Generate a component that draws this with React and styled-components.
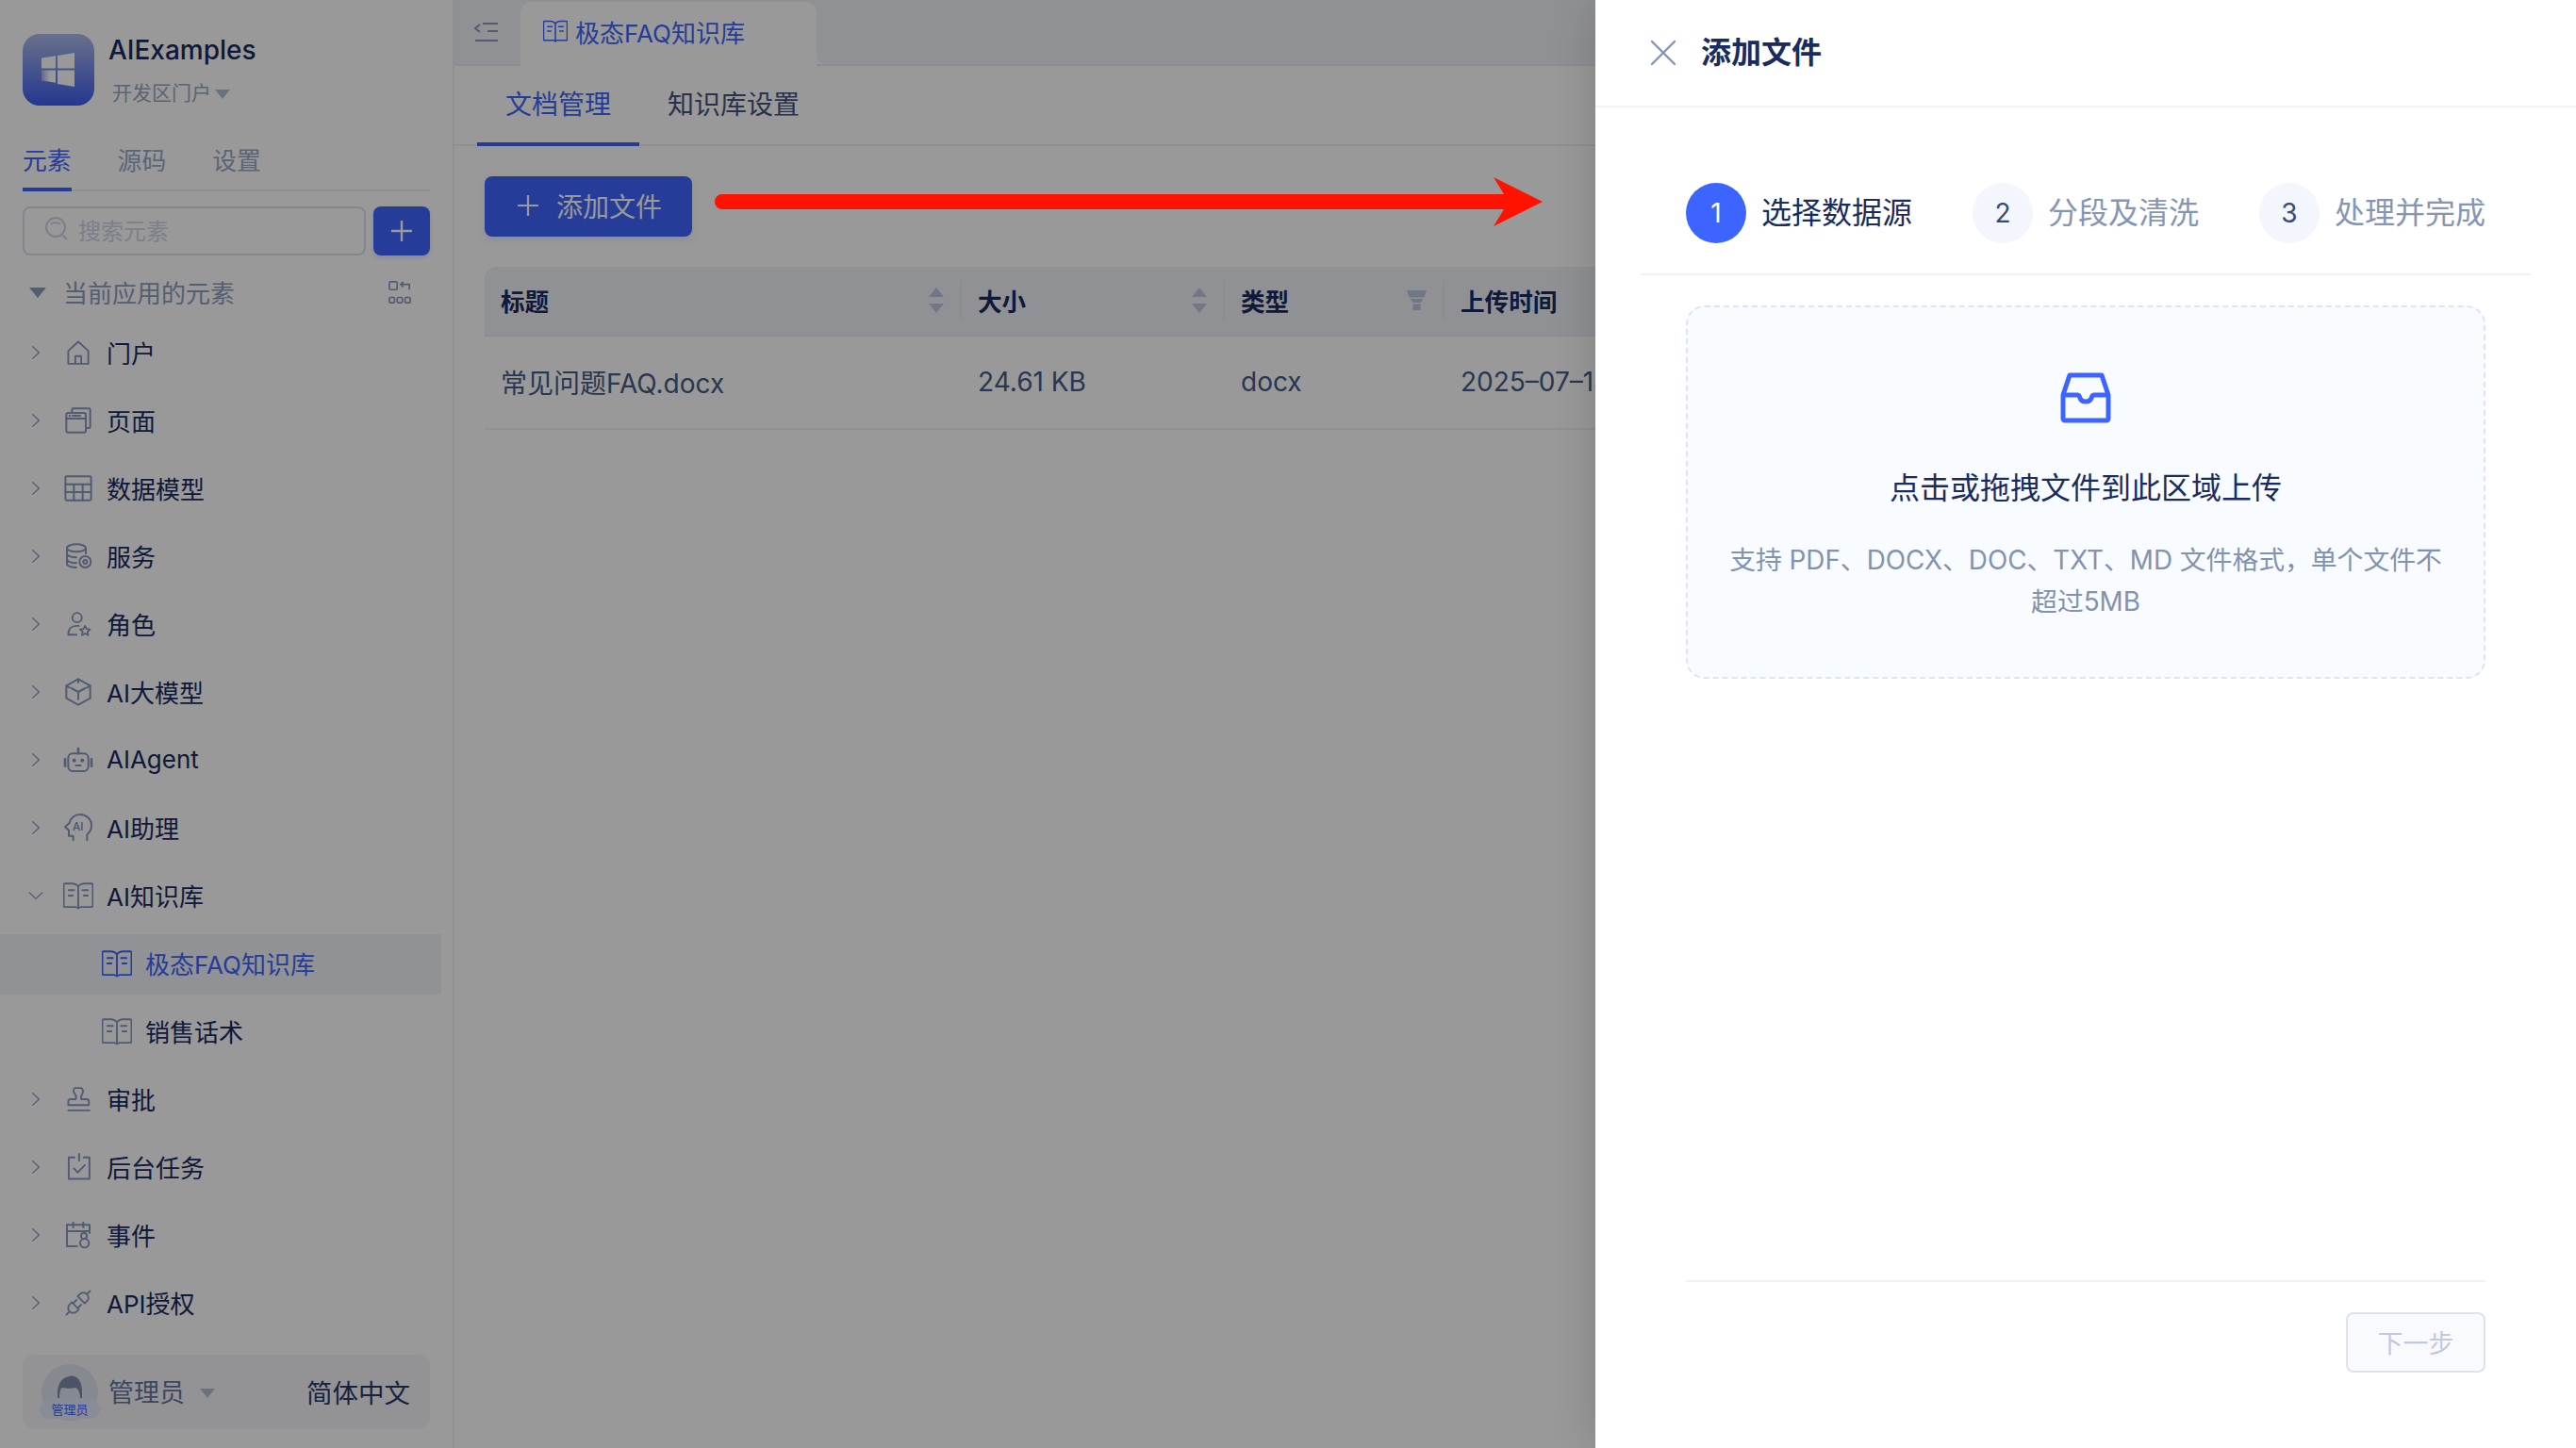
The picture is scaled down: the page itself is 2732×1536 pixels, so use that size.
import React from "react";
import styled, { createGlobalStyle } from "styled-components";

const Global = createGlobalStyle`
  html, body { margin: 0; padding: 0; background: #fff; }
  body { font-family: "Inter", "Noto Sans CJK SC", "Noto Sans", sans-serif; color: #1a2b5f; }
  * { box-sizing: border-box; }
`;

const BLUE = "#3e64ff";
const ICON = "#8798bf";

const Page = styled.div`position: relative; display: flex; width: 2732px; height: 1536px; overflow: hidden; background: #fff;`;
const Sidebar = styled.aside`display: flex; flex-direction: column; flex: 0 0 482px; height: 100%; border-right: 2px solid #eef1f7; background: #fff;`;
const Brand = styled.div`display: flex; gap: 15px; padding: 36px 24px 0; height: 112px;`;
const LogoBox = styled.div`display: flex; align-items: center; justify-content: center; width: 76px; height: 76px; border-radius: 18px; background: linear-gradient(180deg, #aebce8 0%, #3d5cf0 100%);`;
const BrandText = styled.div`display: flex; flex-direction: column;`;
const BrandTitle = styled.div`font-size: 28px; line-height: 34px; color: #1a2b5f; font-weight: 500;`;
const BrandSub = styled.div`display: flex; align-items: center; gap: 4px; margin: 15px 0 0 4px; font-size: 21px; line-height: 28px; color: #9aa6bf;`;
const Caret = styled.span`display: inline-block; width: 0; height: 0; border-left: 8px solid transparent; border-right: 8px solid transparent; border-top: 10px solid #b3bdd4; margin-top: 2px;`;
const SideTabs = styled.div`display: flex; gap: 49px; height: 63px; margin: 28px 24px 0; border-bottom: 2px solid #eef0f5;`;
const SideTab = styled.div`display: flex; align-items: center; height: 63px; padding-bottom: 2px; flex: none; font-size: 25.8px; color: ${p => (p.$active ? BLUE : "#99a8c6")}; border-bottom: 4px solid ${p => (p.$active ? BLUE : "transparent")};`;
const SearchRow = styled.div`display: flex; gap: 8px; padding: 0 24px; margin-top: 16px;`;
const SearchBox = styled.div`display: flex; align-items: center; gap: 11px; flex: 1; height: 52px; padding: 0 0 4px 22px; border: 2px solid #dbe0ea; border-radius: 8px; font-size: 24px; color: #cdd5e6;`;
const AddSquare = styled.div`display: flex; align-items: center; justify-content: center; flex: 0 0 60px; height: 52px; border-radius: 8px; background: ${BLUE}; box-shadow: 0 2px 4px rgba(62,100,255,.2);`;
const SectionHead = styled.div`display: flex; align-items: center; height: 64px; margin-top: 8px; padding: 0 24px 3px 30px; font-size: 26px; color: #8d9dbf;`;
const SectionCaret = styled.span`width: 0; height: 0; border-left: 9px solid transparent; border-right: 9px solid transparent; border-top: 11px solid #8d9dbf; margin: 2px 18px 0 1px;`;
const SectionTools = styled.span`margin-left: auto; margin-right: 20px; display: flex;`;
const Tree = styled.div`display: flex; flex-direction: column; gap: 8px; width: 468px;`;
const TreeRow = styled.div`display: flex; align-items: center; height: 64px; padding: 0 0 3px ${p => (p.$child ? 108 : 29)}px; background: ${p => (p.$selected ? "#f1f4fb" : "transparent")}; color: ${p => (p.$selected ? BLUE : "#1a2b5f")}; font-size: 26px;`;
const ChevronSlot = styled.span`display: flex; align-items: center; justify-content: center; flex: 0 0 18px; width: 18px; margin-right: 20px; color: ${ICON};`;
const IconSlot = styled.span`display: flex; align-items: center; justify-content: center; flex: 0 0 32px; width: 32px; height: 32px; margin-right: 14px; color: ${p => (p.$selected ? BLUE : ICON)};`;
const UserBar = styled.div`display: flex; align-items: center; height: 79px; margin: auto 24px 20px; padding: 0 21px 0 20px; border-radius: 12px; background: #f5f6fa;`;
const Avatar = styled.div`position: relative; flex: 0 0 60px; width: 60px; height: 60px; margin-right: 11px; border-radius: 50%; background: #dfe4ef; display: flex; justify-content: center; align-items: flex-start; padding-top: 12px;`;
const AvatarBadge = styled.span`position: absolute; left: -2px; bottom: 2px; width: 64px; height: 20px; border-radius: 10px; background: #e3e9fb; color: ${BLUE}; font-size: 13px; line-height: 20px; text-align: center;`;
const UserName = styled.span`padding-bottom: 2px; font-size: 27px; color: #66769f; margin-right: 16px;`;
const Lang = styled.span`padding-bottom: 2px; margin-left: auto; font-size: 27.5px; color: #2a3a66;`;

const Main = styled.main`display: flex; flex-direction: column; flex: 1; min-width: 0; background: #fff;`;
const TopBar = styled.div`display: flex; align-items: flex-end; height: 70px; flex: none; padding-left: 21px; background: #f0f2f8; border-bottom: 2px solid #e9ecf3;`;
const Collapse = styled.span`display: flex; align-self: center; width: 26px; margin-right: 23px; color: ${ICON};`;
const DocTab = styled.div`position: relative; display: flex; align-items: center; gap: 8px; width: 314px; height: 68px; margin-bottom: -2px; padding: 0 0 6px 24px; border-radius: 12px 12px 0 0; background: #fff; color: ${BLUE}; font-size: 26px;
  &::after { content: ""; position: absolute; right: -10px; bottom: 2px; width: 10px; height: 10px; background: radial-gradient(circle at 100% 0, transparent 10px, #fff 10.5px); }
`;
const ContentTabs = styled.div`display: flex; flex: none; height: 85px; padding-left: 24px; border-bottom: 2px solid #eef0f5;`;
const ContentTab = styled.div`display: flex; align-items: center; height: 85px; padding: 0 30px 4px; font-size: 28px; color: ${p => (p.$active ? BLUE : "#44547f")}; border-bottom: 4px solid ${p => (p.$active ? BLUE : "transparent")};`;
const Content = styled.div`display: flex; flex-direction: column; gap: 32px; padding: 32px;`;
const PrimaryButton = styled.div`display: flex; align-items: center; gap: 19px; width: 220px; height: 64px; padding: 0 0 2px 35px; border-radius: 8px; background: ${BLUE}; color: #fff; font-size: 28px; box-shadow: 0 4px 8px rgba(62,100,255,.12);`;
const Table = styled.div`display: grid; grid-template-columns: 506px 279px 233px 1fr; width: 2186px;`;
const HeadCell = styled.div`position: relative; display: flex; align-items: center; justify-content: space-between; height: 74px; padding: 0 19px 2px 17px; background: #f0f2f8; border-bottom: 2px solid #e9ecf3; font-size: 25.6px; font-weight: 600; color: #1a2b5f; ${p => p.$first && "border-top-left-radius: 12px;"}
  ${p => !p.$last && `&::after { content: ""; position: absolute; right: 0; top: 15px; height: 42px; width: 2px; background: #e8ebf2; }`}
`;
const BodyCell = styled.div`display: flex; align-items: center; height: 99px; padding: 0 0 1px 17px; border-bottom: 2px solid #eef0f5; font-size: 28px; color: #495a85; white-space: nowrap; overflow: hidden;`;

const Mask = styled.div`position: absolute; inset: 0; background: rgba(0,0,0,.4); z-index: 1;`;
const Arrow = styled.svg`position: absolute; left: 758px; top: 188px; z-index: 2;`;
const Drawer = styled.section`position: absolute; top: 0; right: 0; bottom: 0; z-index: 3; display: flex; flex-direction: column; width: 1040px; background: #fff; box-shadow: -8px 0 40px rgba(0,0,0,.12);`;
const DrawerHead = styled.header`display: flex; align-items: center; gap: 26px; flex: none; height: 114px; padding-left: 58px; border-bottom: 2px solid #f0f3f8;`;
const CloseIcon = styled.span`display: flex; color: #8594b4;`;
const DrawerTitle = styled.h2`margin: 0; font-size: 32px; line-height: 44px; font-weight: 600; color: #1a2b5f;`;
const Steps = styled.div`display: flex; justify-content: space-between; flex: none; margin: 80px 48px 0; padding: 0 48px 32px; border-bottom: 2px solid #f1f2f5;`;
const Step = styled.div`display: flex; align-items: center; gap: 16px;`;
const StepDot = styled.span`display: flex; align-items: center; justify-content: center; width: 64px; height: 64px; border-radius: 50%; font-size: 28px; background: ${p => (p.$active ? BLUE : "#f3f6fc")}; color: ${p => (p.$active ? "#fff" : "#3a4a78")};`;
const StepLabel = styled.span`font-size: 32px; line-height: 44px; color: ${p => (p.$active ? "#1a2b5f" : "#8595b3")};`;
const Dropzone = styled.div`display: flex; flex-direction: column; align-items: center; flex: none; height: 396px; margin: 32px 96px 0; padding-top: 69px; border: 2px dashed #dfe4f0; border-radius: 20px; background: #f8fbff;`;
const DropTitle = styled.div`margin-top: 47px; font-size: 32px; line-height: 44px; font-weight: 400; color: #1a2b5f;`;
const DropHint = styled.div`margin-top: 32px; width: 780px; font-size: 27.8px; line-height: 44px; text-align: center; color: #8292b0;`;
const DrawerFoot = styled.footer`display: flex; justify-content: flex-end; margin: auto 96px 80px; padding-top: 32px; border-top: 2px solid #f1f2f5;`;
const NextButton = styled.div`display: flex; align-items: center; justify-content: center; width: 148px; height: 64px; padding-bottom: 2px; border: 2px solid #dde2ee; border-radius: 8px; background: #f9fafd; color: #c1c9e0; font-size: 27px;`;

const Svg = ({ size = 32, children, sw = 1.5, vb = "0 0 24 24" }) => (
  <svg width={size} height={size} viewBox={vb} fill="none" stroke="currentColor" strokeWidth={sw} strokeLinecap="round" strokeLinejoin="round">{children}</svg>
);

const Chevron = () => <Svg size={24} sw={1.7}><path d="M7.500 3.500 16.500 12 7.500 20.500" /></Svg>;
const ChevronDown = () => <Svg size={24} sw={1.7}><path d="M3 8 12 16.500 21 8" /></Svg>;
const Home = () => <Svg size={30}><path d="M3.500 10.500 12 2.800l8.500 7.700V21.500h-17zM9.500 21.500v-6.500h5v6.500" /></Svg>;
const PageIc = () => <Svg><path d="M7 6V3.500a1 1 0 0 1 1-1h12.500a1 1 0 0 1 1 1V17a1 1 0 0 1-1 1H18" /><rect x="2.500" y="6" width="15.500" height="15.500" rx="1.500" /><path d="M2.500 10.500H18M5 8.300h.5M7.500 8.300h6" /></Svg>;
const TableIc = () => <Svg><rect x="1.800" y="2.500" width="20.400" height="19" rx="1" /><path d="M1.800 8.800h20.400M1.800 15h20.400M8.500 8.800v12.700M15.500 8.800v12.700" /></Svg>;
const ServiceIc = () => <Svg><ellipse cx="10.500" cy="5.500" rx="7.500" ry="3" /><path d="M3 5.500v12.500c0 1.700 3.400 3 7.500 3M3 10c0 1.700 3.400 3 7.500 3M3 14.500c0 1.700 3.400 3 7.500 3M18 5.500V10" /><circle cx="17.500" cy="16.500" r="4.500" /><circle cx="17.500" cy="16.500" r="1.500" /></Svg>;
const RoleIc = () => <Svg size={30}><circle cx="11" cy="6.500" r="4" /><path d="M3.500 21c0-5 3-7.500 7-7.500h2M3.500 21h7" /><path d="m17.800 13.500 1.300 2.600 2.900.4-2.100 2 .5 2.900-2.600-1.400-2.600 1.400.5-2.900-2.100-2 2.900-.4z" /></Svg>;
const CubeIc = () => <Svg><path d="M12 1.800 21.500 7v10L12 22.300 2.500 17V7z" /><path d="m12 12 5.500-3M12 12 6.500 9M12 12v6M12 1.800v2.700M2.500 7l2.500 1.500M21.500 7 19 8.500" /></Svg>;
const BotIc = () => <Svg><rect x="4" y="7" width="16" height="14" rx="3.500" /><path d="M12 7V3M1.500 11.500v5.500M22.500 11.500v5.500" strokeWidth="2" /><circle cx="8.800" cy="12.500" r=".8" /><circle cx="15.200" cy="12.500" r=".8" /><path d="M10 16.500h4" /></Svg>;
const HeadIc = () => <Svg><path d="M8 22v-3.500H4.500V14L1.500 11.500l3.300-3C5.500 4.500 9 1.500 13.500 1.500c4.800 0 9 3.800 9 8.700 0 3.300-1 5.300-3.500 7.300v4.500" /><text x="7.500" y="14.500" fontSize="8.500" stroke="none" fill="currentColor" fontFamily="Inter" fontWeight="600">AI</text></Svg>;
const BookIc = ({ size = 32 }) => <Svg size={size} sw={1.3} vb="1 1 22 22"><path d="M12 5.500C11 3.800 9.500 3.200 7.500 3.200H2.200a.8.8 0 0 0-.8.8v15.500c0 .4.400.8.800.8H10c.8 0 1.200.3 2 1 .8-.7 1.200-1 2-1h7.800c.4 0 .8-.4.800-.8V4a.8.8 0 0 0-.8-.8h-5.300c-2 0-3.500.6-4.500 2.300zM12 5.500V21" /><path d="M5 8h4M5 12h3M15 8h4M16 12h3" /></Svg>;
const StampIc = () => <Svg size={30}><path d="M9 2.500h5.500c1.800 1.200 2 3.800.8 5.200-1 1.200-1.300 2.300-.8 4.300h4.500a2 2 0 0 1 2 2V17H3.500v-3a2 2 0 0 1 2-2H10c.5-2 .2-3.100-.8-4.300C8 6.300 7.300 3.800 9 2.500zM3.500 21.500h18" /></Svg>;
const TaskIc = () => <Svg size={31}><path d="M8.500 4.500H3.800v17.500h17V4.500H16M12.300 1.500v5.500" /><path d="m8 13.500 3.300 3.300 5.700-6" /></Svg>;
const EventIc = () => <Svg><path d="M11 21H3V4h18v6.500M3 9h18M8 2v4M16 2v4" /><circle cx="16.500" cy="12.800" r="2.300" /><circle cx="17" cy="18.500" r="3.500" /></Svg>;
const PlugIc = () => <Svg size={30}><path d="m6.500 11.500 6 6-1.800 1.800c-1.700 1.700-4.300 1.700-6 0s-1.700-4.300 0-6zM17.500 12.500l-6-6 1.800-1.800c1.700-1.700 4.300-1.700 6 0s1.700 4.300 0 6zM2 22l2.500-2.500M22 2l-2.500 2.500M8 12l2.500-2.500M12 16l2.500-2.500" /></Svg>;
const Logo = () => (
  <svg width="38" height="38" viewBox="0 0 38 38">
    <defs><linearGradient id="lg" x1="0" x2="1" y1="0" y2="0"><stop offset="0" stopColor="#fff" stopOpacity=".35" /><stop offset=".6" stopColor="#fff" /></linearGradient></defs>
    <path d="M1 6.500 16 4.200v13.300H1zM18 3.900 36 1v16.500H18z" fill="#fff" />
    <path d="M1 19.500h15v13.300L1 30.500z" fill="url(#lg)" />
    <path d="M18 19.500h18V37l-18-2.900z" fill="#fff" />
  </svg>
);

const items = [
  ["门户", Home], ["页面", PageIc], ["数据模型", TableIc], ["服务", ServiceIc], ["角色", RoleIc],
  ["AI大模型", CubeIc], ["AIAgent", BotIc], ["AI助理", HeadIc], ["AI知识库", BookIc, "open"],
  ["极态FAQ知识库", BookIc, "selected"], ["销售话术", BookIc, "child"],
  ["审批", StampIc], ["后台任务", TaskIc], ["事件", EventIc], ["API授权", PlugIc],
];

const Sorter = () => (
  <svg width="16" height="27" viewBox="0 0 16 27" fill="#bcc6de"><path d="M8 0 16 10H0zM8 27 0 17h16z" /></svg>
);
const Funnel = () => (
  <svg width="21" height="21" viewBox="0 0 21 21" fill="#bcc6de"><path d="M0 0h21l-2.500 7.500h-16zM3.500 9h14L14.500 13h-8zM6.500 14.500h8V21h-8z" /></svg>
);

export default function App() {
  return (
    <Page>
      <Global />
      <Sidebar>
        <Brand>
          <LogoBox><Logo /></LogoBox>
          <BrandText>
            <BrandTitle>AIExamples</BrandTitle>
            <BrandSub>开发区门户<Caret /></BrandSub>
          </BrandText>
        </Brand>
        <SideTabs>
          <SideTab $active>元素</SideTab>
          <SideTab>源码</SideTab>
          <SideTab>设置</SideTab>
        </SideTabs>
        <SearchRow>
          <SearchBox>
            <svg width="24" height="26" viewBox="0 0 24 26" fill="none" stroke="#cdd5e6" strokeWidth="2"><circle cx="11" cy="11" r="10" /><path d="M18 19l5 5M6 8c1.500-2.500 8-2.500 10 0" /></svg>
            搜索元素
          </SearchBox>
          <AddSquare>
            <svg width="24" height="24" viewBox="0 0 24 24" stroke="#fff" strokeWidth="2.400"><path d="M12 1v22M1 12h22" /></svg>
          </AddSquare>
        </SearchRow>
        <SectionHead>
          <SectionCaret />当前应用的元素
          <SectionTools>
            <svg width="24" height="24" viewBox="0 0 26 26" fill="none" stroke="#8798bf" strokeWidth="1.800"><rect x="1" y="1" width="9" height="9" rx="1.500" /><path d="M14 4h10v6M17 1l-3 3 3 3" /><rect x="1" y="19" width="6" height="6" rx="1.500" /><rect x="10" y="19" width="6" height="6" rx="1.500" /><rect x="19" y="19" width="6" height="6" rx="1.500" /></svg>
          </SectionTools>
        </SectionHead>
        <Tree>
          {items.map(([label, Ic, kind]) => {
            const child = kind === "selected" || kind === "child";
            const selected = kind === "selected";
            return (
              <TreeRow key={label} $child={child} $selected={selected}>
                {!child && <ChevronSlot>{kind === "open" ? <ChevronDown /> : <Chevron />}</ChevronSlot>}
                <IconSlot $selected={selected}><Ic /></IconSlot>
                {label}
              </TreeRow>
            );
          })}
        </Tree>
        <UserBar>
          <Avatar>
            <svg width="26" height="24" viewBox="0 0 26 24" fill="#7d8aa8"><path d="M0 24C-1 10 4 2 13 1c1 0 2-1 3-1 0 1 1 1 2 1 6 2 9 10 8 23h-2c0-6-2-10-5-11-4 1-10 1-14 0-2 1-3 5-3 11z" /></svg>
            <AvatarBadge>管理员</AvatarBadge>
          </Avatar>
          <UserName>管理员</UserName>
          <Caret />
          <Lang>简体中文</Lang>
        </UserBar>
      </Sidebar>
      <Main>
        <TopBar>
          <Collapse>
            <svg width="26" height="22" viewBox="0 0 26 22" fill="none" stroke="currentColor" strokeWidth="2"><path d="M9 2h16M14 10h11M1 20h24M6 3 1 7l5 4" strokeWidth="2" /></svg>
          </Collapse>
          <DocTab><BookIc size={26} />极态FAQ知识库</DocTab>
        </TopBar>
        <ContentTabs>
          <ContentTab $active>文档管理</ContentTab>
          <ContentTab>知识库设置</ContentTab>
        </ContentTabs>
        <Content>
          <PrimaryButton>
            <svg width="22" height="22" viewBox="0 0 22 22" stroke="#fff" strokeWidth="2.200"><path d="M11 0v22M0 11h22" /></svg>
            添加文件
          </PrimaryButton>
          <Table>
            <HeadCell $first>标题<Sorter /></HeadCell>
            <HeadCell>大小<Sorter /></HeadCell>
            <HeadCell>类型<Funnel /></HeadCell>
            <HeadCell $last>上传时间</HeadCell>
            <BodyCell>常见问题FAQ.docx</BodyCell>
            <BodyCell>24.61 KB</BodyCell>
            <BodyCell>docx</BodyCell>
            <BodyCell>2025–07–18 10:32:15</BodyCell>
          </Table>
        </Content>
      </Main>
      <Mask />
      <Arrow width="878" height="52" viewBox="0 0 878 52">
        <path d="M8 18H837L826 0 878 26 826 52 837 34H8a8 8 0 0 1 0-16z" fill="#ff1200" />
      </Arrow>
      <Drawer>
        <DrawerHead>
          <CloseIcon>
            <svg width="28" height="28" viewBox="0 0 28 28" stroke="currentColor" strokeWidth="2.400" strokeLinecap="round"><path d="M2 2 26 26M26 2 2 26" /></svg>
          </CloseIcon>
          <DrawerTitle>添加文件</DrawerTitle>
        </DrawerHead>
        <Steps>
          <Step><StepDot $active>1</StepDot><StepLabel $active>选择数据源</StepLabel></Step>
          <Step><StepDot>2</StepDot><StepLabel>分段及清洗</StepLabel></Step>
          <Step><StepDot>3</StepDot><StepLabel>处理并完成</StepLabel></Step>
        </Steps>
        <Dropzone>
          <svg width="54" height="54" viewBox="0 0 54 54" fill="none" stroke={BLUE} strokeWidth="5" strokeLinejoin="round"><path d="M10 3h34l7 21v25a2 2 0 0 1-2 2H5a2 2 0 0 1-2-2V24z" /><path d="M3 24h15c1 0 2 .5 2.500 2 1 3.500 3.500 5 6.500 5s5.500-1.500 6.500-5c.5-1.500 1.500-2 2.500-2h15" /></svg>
          <DropTitle>点击或拖拽文件到此区域上传</DropTitle>
          <DropHint>支持 PDF、DOCX、DOC、TXT、MD 文件格式，单个文件不超过5MB</DropHint>
        </Dropzone>
        <DrawerFoot><NextButton>下一步</NextButton></DrawerFoot>
      </Drawer>
    </Page>
  );
}
